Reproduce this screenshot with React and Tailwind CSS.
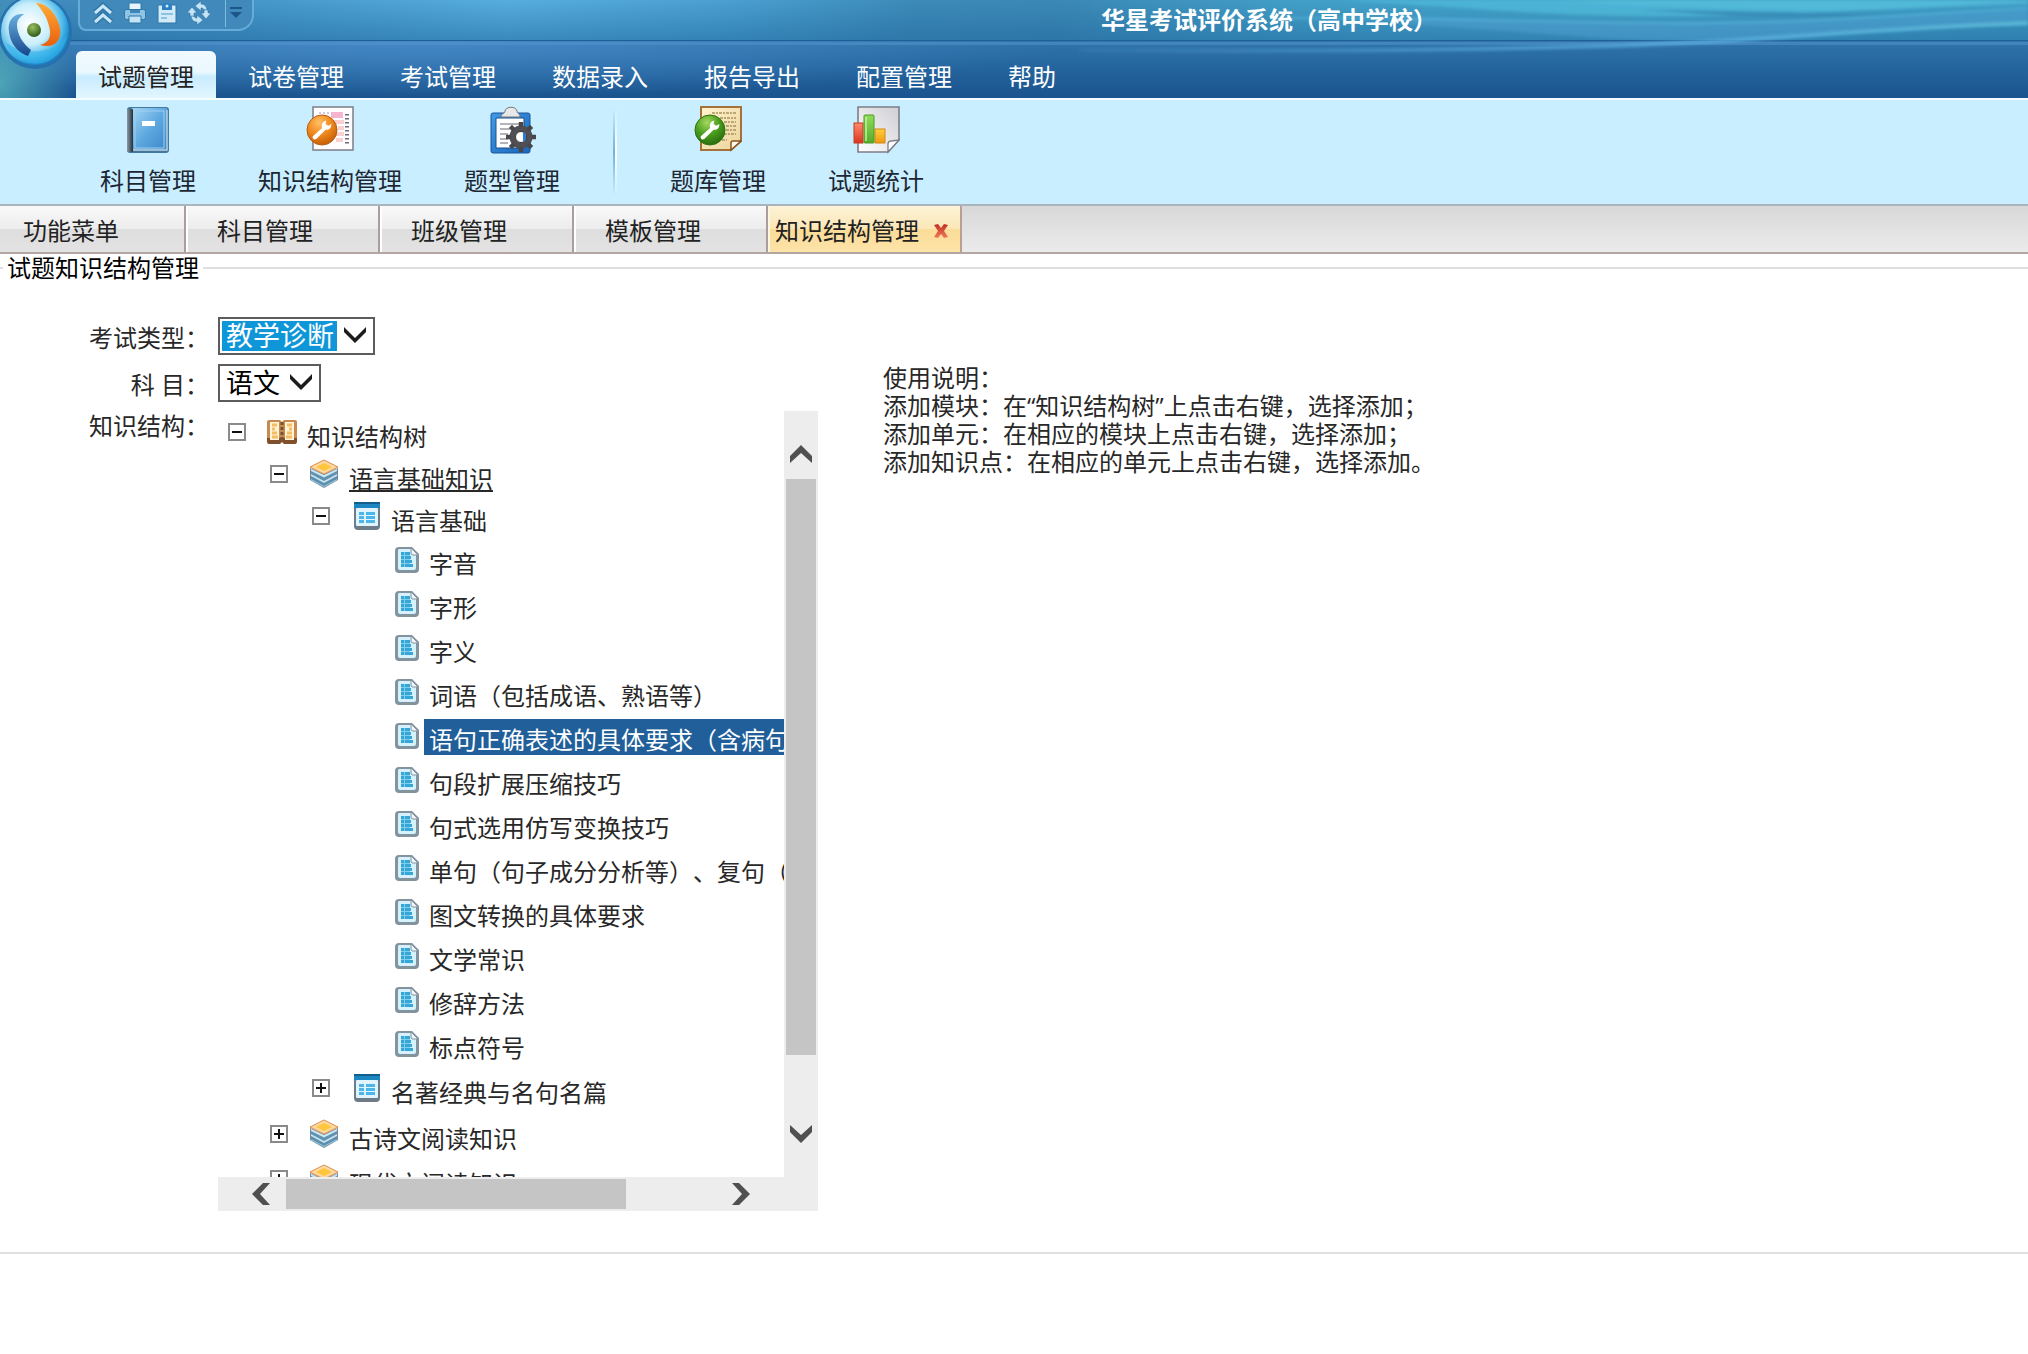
import React from "react";

const WRENCH =
  "M3 17 L11.5 9.5 C10.5 6.5 12 3.5 15.2 2.8 L14.6 6 L17 7.6 L19.8 5.8 C20.3 9 17.8 11.6 14.6 11.2 L6.2 19.6 C4 20.6 2.2 18.8 3 17 Z";

function HeaderBackdrop() {
  return (
    <svg className="absolute inset-0 h-full w-full" viewBox="0 0 2028 98" preserveAspectRatio="none" aria-hidden="true">
      <defs>
        <linearGradient id="hTop" x1="0" x2="1" y1="0" y2="0">
          <stop offset="0" stopColor="#3f88ba" />
          <stop offset="0.12" stopColor="#4597ca" />
          <stop offset="0.25" stopColor="#56aede" />
          <stop offset="0.36" stopColor="#4aa0d0" />
          <stop offset="0.45" stopColor="#3d8bb8" />
          <stop offset="0.52" stopColor="#3b88b5" />
          <stop offset="0.64" stopColor="#42a0c8" />
          <stop offset="0.8" stopColor="#45a5c9" />
          <stop offset="1" stopColor="#3d9cc4" />
        </linearGradient>
        <linearGradient id="hShade" x1="0" x2="0" y1="0" y2="1">
          <stop offset="0" stopColor="#1d6299" stopOpacity="0" />
          <stop offset="1" stopColor="#1d6299" stopOpacity="0.5" />
        </linearGradient>
        <linearGradient id="hNav" x1="0" x2="0" y1="0" y2="1">
          <stop offset="0" stopColor="#2f74ab" />
          <stop offset="1" stopColor="#1a538f" />
        </linearGradient>
        <radialGradient id="hGlow">
          <stop offset="0" stopColor="#4b90d0" stopOpacity="0.75" />
          <stop offset="1" stopColor="#4b90d0" stopOpacity="0" />
        </radialGradient>
        <radialGradient id="hTeal" cx="0" cy="0.85" r="1">
          <stop offset="0" stopColor="#58b6bf" stopOpacity="0.8" />
          <stop offset="1" stopColor="#58b6bf" stopOpacity="0" />
        </radialGradient>
        <linearGradient id="hFade" x1="0" x2="1" y1="0" y2="0">
          <stop offset="0" stopColor="#5aaee0" stopOpacity="0.1" />
          <stop offset="0.6" stopColor="#5aaee0" stopOpacity="0.8" />
          <stop offset="1" stopColor="#5ab8d6" stopOpacity="1" />
        </linearGradient>
        <filter id="hSoft" x="-5%" y="-50%" width="110%" height="200%">
          <feGaussianBlur stdDeviation="1.6" />
        </filter>
        <clipPath id="hNavClip">
          <rect y="41" width="2028" height="57" />
        </clipPath>
      </defs>
      <rect width="2028" height="41" fill="url(#hTop)" />
      <rect width="2028" height="41" fill="url(#hShade)" />
      <rect y="41" width="2028" height="57" fill="url(#hNav)" />
      <g clipPath="url(#hNavClip)">
        <ellipse cx="420" cy="41" rx="640" ry="56" fill="url(#hGlow)" />
      </g>
      <rect width="76" height="98" fill="url(#hTeal)" />
      <g filter="url(#hSoft)">
        <path d="M1400 16 C1560 22 1700 26 1900 15 L2028 8 V24 C1950 26 1870 31 1740 40 H1640 C1560 36 1480 28 1400 24 Z" fill="#4f9fd2" opacity="0.5" />
        <path d="M1340 0 C1480 8 1560 18 1700 16 C1820 14 1900 8 2028 0 Z" fill="#50bbdb" opacity="0.7" />
        <path d="M1560 0 C1660 8 1780 10 1880 10 L2028 4 V0 Z" fill="#58c0de" opacity="0.6" />
        <path d="M1640 10 C1740 17 1820 19 1880 15 C1820 13 1740 11 1640 10 Z" fill="#3689b5" opacity="0.9" />
        <path d="M1290 18 C1480 18 1560 23 1700 23 C1800 23 1880 16 2028 8" stroke="#5bbde0" strokeWidth="2" fill="none" opacity="0.6" />
      </g>
      <rect y="40" width="2028" height="1" fill="#1f5f97" />
      <rect y="42" width="2028" height="3" fill="#5596cd" opacity="0.5" />
      <g filter="url(#hSoft)" fill="none">
        <path d="M1080 50 C1400 53 1620 47 1740 40 C1850 32 1940 26 2028 23" stroke="url(#hFade)" strokeWidth="4" />
      </g>
    </svg>
  );
}

function Logo() {
  return (
    <svg className="h-full w-full" viewBox="0 0 76 76" aria-hidden="true">
      <defs>
        <radialGradient id="lgBall" cx="0.42" cy="0.4" r="0.6">
          <stop offset="0" stopColor="#ffffff" />
          <stop offset="0.5" stopColor="#c9eefb" />
          <stop offset="0.85" stopColor="#3fb2e6" />
          <stop offset="1" stopColor="#1b86c8" />
        </radialGradient>
        <linearGradient id="lgBlue" x1="0" x2="0" y1="0" y2="1">
          <stop offset="0" stopColor="#6ab0e0" />
          <stop offset="1" stopColor="#16468c" />
        </linearGradient>
        <linearGradient id="lgOrange" x1="0" x2="0" y1="0" y2="1">
          <stop offset="0" stopColor="#ffac38" />
          <stop offset="1" stopColor="#ea5f0c" />
        </linearGradient>
        <radialGradient id="lgGreen" cx="0.4" cy="0.3" r="0.7">
          <stop offset="0" stopColor="#9cc060" />
          <stop offset="1" stopColor="#2f5c1a" />
        </radialGradient>
      </defs>
      <circle cx="35" cy="37" r="37" fill="#2672ae" />
      <circle cx="35" cy="36" r="34" fill="url(#lgBall)" />
      <path d="M6 48 C14 66 32 72 46 67 C58 62 66 52 67 40 C56 58 28 62 6 48 Z" fill="#34b4ec" opacity="0.6" />
      <path d="M24 19 C13 18 7 26 9 37 C10 48 18 58 28 61 L31 55 C23 49 17 39 17 30 C17 25 20 22 24 19 Z" fill="url(#lgBlue)" />
      <path d="M36 8 C47 8 57 19 60 33 C62 46 54 54 40 50 C49 48 52 41 49 31 C47 22 42 15 36 8 Z" fill="url(#lgOrange)" />
      <circle cx="34" cy="35" r="7" fill="url(#lgGreen)" />
    </svg>
  );
}

function UpIcon() {
  return (
    <svg className="h-6 w-6" viewBox="0 0 24 24" fill="none" aria-hidden="true">
      <g stroke="#2d76a8" strokeWidth="6"><path d="M4 12 L12 5 L20 12" /><path d="M4 21 L12 14 L20 21" /></g>
      <g stroke="#c9e6f6" strokeWidth="3"><path d="M4 12 L12 5 L20 12" /><path d="M4 21 L12 14 L20 21" /></g>
    </svg>
  );
}
function PrintIcon() {
  return (
    <svg className="h-6 w-6" viewBox="0 0 24 24" aria-hidden="true">
      <path d="M6 2 h12 v7 h-12 Z" fill="#e6f5fd" stroke="#2d76a8" />
      <rect x="1.500" y="8.500" width="21" height="10" rx="2" fill="#8fc4e4" stroke="#2d76a8" />
      <rect x="7" y="9" width="10" height="3" fill="#3f86b8" />
      <path d="M6 15 h12 v7 h-12 Z" fill="#c4e3f4" stroke="#2d76a8" />
    </svg>
  );
}
function ClipIcon() {
  return (
    <svg className="h-6 w-6" viewBox="0 0 24 24" aria-hidden="true">
      <path d="M3 4 h18 v18 h-18 Z" fill="#d3ebf8" stroke="#2d76a8" />
      <path d="M7 9 V5 C8 1 16 1 17 5 V9 Z" fill="#2c7fc4" />
      <circle cx="12" cy="5" r="1.500" fill="#d6eefb" />
      <path d="M6 13 h12 M6 17 h6" stroke="#8cc2e2" strokeWidth="2" />
    </svg>
  );
}
function RefreshIcon() {
  return (
    <svg className="h-6 w-6" viewBox="0 0 24 24" aria-hidden="true">
      <g fill="#c4e3f5" stroke="#2d76a8" strokeWidth="0.6">
        <path d="M8 5 L14 0 V3 C18 3 20 6 20 10 L16 8 C16 7 15 7 14 7 V10 Z" />
        <path d="M16 19 L10 24 V21 C6 21 4 18 4 14 L8 16 C8 17 9 17 10 17 V14 Z" />
        <path d="M0 12 L5 6 L10 12 H7 V15 H3 V12 Z" />
        <path d="M24 12 L19 18 L14 12 H17 V9 H21 V12 Z" />
      </g>
    </svg>
  );
}

const QUICK = [
  { label: "收起", Icon: UpIcon },
  { label: "打印", Icon: PrintIcon },
  { label: "粘贴", Icon: ClipIcon },
  { label: "刷新", Icon: RefreshIcon },
];

const NAV = ["试卷管理", "考试管理", "数据录入", "报告导出", "配置管理", "帮助"];

function BookIcon() {
  return (
    <svg className="h-12 w-12" viewBox="0 0 48 48" aria-hidden="true">
      <defs>
        <linearGradient id="bkG" x1="0" x2="1" y1="0" y2="1">
          <stop offset="0" stopColor="#a5d6f5" />
          <stop offset="0.5" stopColor="#5fa9e0" />
          <stop offset="1" stopColor="#3b86cb" />
        </linearGradient>
        <linearGradient id="bkS" x1="0" x2="1" y1="0" y2="0">
          <stop offset="0" stopColor="#8b9aa4" />
          <stop offset="1" stopColor="#22303a" />
        </linearGradient>
      </defs>
      <rect x="3" y="1" width="42" height="46" rx="3" fill="#44789f" />
      <rect x="8" y="2" width="35" height="42" rx="1" fill="url(#bkG)" />
      <rect x="11" y="5" width="29" height="37" fill="none" stroke="#9bd0f2" />
      <path d="M43 4 V44 H9" stroke="#b9cfdd" strokeWidth="1.500" fill="none" />
      <rect x="3" y="3" width="6" height="43" rx="1" fill="url(#bkS)" />
      <rect x="18" y="15" width="13" height="5" fill="#fff" />
    </svg>
  );
}
function WrenchPageIcon({ green }) {
  return (
    <svg className="h-12 w-12" viewBox="0 0 48 48" aria-hidden="true">
      <defs>
        <radialGradient id="wpO" cx="0.4" cy="0.25" r="0.8">
          <stop offset="0" stopColor="#ffc066" />
          <stop offset="0.5" stopColor="#f08a1d" />
          <stop offset="1" stopColor="#c25a06" />
        </radialGradient>
        <radialGradient id="wpG" cx="0.4" cy="0.25" r="0.8">
          <stop offset="0" stopColor="#a4d95e" />
          <stop offset="0.5" stopColor="#4c9f1e" />
          <stop offset="1" stopColor="#26680c" />
        </radialGradient>
        <linearGradient id="wpP" x1="0" x2="1" y1="0" y2="1">
          <stop offset="0" stopColor="#fff3cf" />
          <stop offset="1" stopColor="#ecd49b" />
        </linearGradient>
      </defs>
      {green ? (
        <g>
          <path d="M7 1 H47 V35 L37 44 H7 Z" fill="url(#wpP)" stroke="#a5713a" strokeWidth="2" />
          <path d="M47 35 L37 44 V37 Q37 35 39 35 Z" fill="#fffaf0" stroke="#8a531c" strokeWidth="1.500" />
          <g stroke="#a8935f" strokeWidth="1.500" strokeDasharray="3 1 2 1">
            <path d="M18 7 H42 M26 12 H42 M30 16 H42 M32 20 H42 M32 24 H42 M30 28 H42 M28 34 H33" />
          </g>
        </g>
      ) : (
        <g>
          <rect x="7" y="1" width="40" height="43" fill="#fffdfd" stroke="#84848f" strokeWidth="1.600" />
          <rect x="25" y="6" width="12" height="6" fill="#f6b5cf" />
          <path d="M13 7 H23" stroke="#c4b4d0" strokeWidth="1.500" strokeDasharray="2 2" />
          <g fill="#fbd0d0">
            <rect x="28" y="14" width="10" height="4" /><rect x="32" y="20" width="6" height="4" />
            <rect x="30" y="26" width="8" height="4" /><rect x="30" y="32" width="7" height="4" />
          </g>
          <path d="M41 8 V39" stroke="#6f6a80" strokeWidth="4" strokeDasharray="1.500 2.500" />
        </g>
      )}
      <circle cx="16" cy="24" r="15" fill={green ? "url(#wpG)" : "url(#wpO)"} stroke={green ? "#2c7010" : "#b75c0e"} />
      <g transform="translate(3.5,11.5) scale(1.1)">
        <path d={WRENCH} fill="#fff" />
      </g>
    </svg>
  );
}
function GearClipIcon() {
  return (
    <svg className="h-12 w-12" viewBox="0 0 48 48" aria-hidden="true">
      <defs>
        <linearGradient id="gcB" x1="0" x2="1" y1="0" y2="1">
          <stop offset="0" stopColor="#3f9bea" />
          <stop offset="1" stopColor="#1a66b8" />
        </linearGradient>
      </defs>
      <rect x="3" y="7" width="39" height="40" rx="2" fill="url(#gcB)" stroke="#1c5596" />
      <path d="M8 12 H36 V42 H8 Z" fill="#fff" stroke="#1b4f8c" />
      <g stroke="#9a9aa2" strokeWidth="1.500"><path d="M12 18 H32 M12 23 H22 M12 28 H20 M12 33 H20 M12 37 H20" /></g>
      <path d="M13 11 C13 7 17 8 17 5 C18 0 28 0 29 5 C29 8 32 7 32 11 Z" fill="#e8e8e8" stroke="#777" />
      <g transform="translate(33,31)">
        <circle r="8.500" fill="none" stroke="#505054" strokeWidth="6" />
        <g stroke="#48484c" strokeWidth="4.500">
          <path d="M0 -15 V-10 M0 15 V10 M-15 0 H-10 M15 0 H10 M-10.600 -10.600 L-7 -7 M10.600 10.600 L7 7 M-10.600 10.600 L-7 7 M10.600 -10.600 L7 -7" />
        </g>
        <circle r="5.500" fill="#fff" stroke="#333" />
        <path d="M2 -5 A5.500 5.500 0 0 1 2 5 Z" fill="#2c7bd0" />
      </g>
    </svg>
  );
}
function ChartPageIcon() {
  return (
    <svg className="h-12 w-12" viewBox="0 0 48 48" aria-hidden="true">
      <defs>
        <linearGradient id="cpP" x1="0" x2="1" y1="1" y2="0">
          <stop offset="0" stopColor="#ffffff" />
          <stop offset="1" stopColor="#cfcfd4" />
        </linearGradient>
        <linearGradient id="cpR" x1="0" x2="0" y1="0" y2="1"><stop offset="0" stopColor="#ff8a70" /><stop offset="1" stopColor="#d8371f" /></linearGradient>
        <linearGradient id="cpG" x1="0" x2="0" y1="0" y2="1"><stop offset="0" stopColor="#8fdd5a" /><stop offset="1" stopColor="#57ab2b" /></linearGradient>
        <linearGradient id="cpY" x1="0" x2="0" y1="0" y2="1"><stop offset="0" stopColor="#ffcf3f" /><stop offset="1" stopColor="#ee9a10" /></linearGradient>
      </defs>
      <path d="M6 1 H47 V34 L36 46 H6 Z" fill="url(#cpP)" stroke="#7d7d88" strokeWidth="1.600" />
      <path d="M47 34 L36 46 V38 Q36 35 39 35 Z" fill="#fff" stroke="#7d7d88" strokeWidth="1.300" />
      <rect x="2" y="17" width="9" height="20" fill="url(#cpR)" stroke="#c43a22" />
      <rect x="23" y="23" width="10" height="14" fill="url(#cpY)" stroke="#d48a10" />
      <rect x="12" y="9" width="10" height="28" rx="1" fill="url(#cpG)" stroke="#4a9a22" />
      <path d="M14 11 V35" stroke="#c4f0a0" strokeWidth="1.500" />
    </svg>
  );
}

function RibbonButton({ label, children }) {
  return (
    <button type="button" className="flex h-full flex-col items-center px-[31px] pt-1.5">
      {children}
      <span className="mt-[11px] leading-8">{label}</span>
    </button>
  );
}

function Ribbon() {
  return (
    <div className="flex h-[106px] items-stretch border-t-2 border-[#f4fcff] bg-[#c9eeff] pl-[69px] text-[#1d2733]">
      <RibbonButton label="科目管理"><BookIcon /></RibbonButton>
      <RibbonButton label="知识结构管理"><WrenchPageIcon /></RibbonButton>
      <RibbonButton label="题型管理"><GearClipIcon /></RibbonButton>
      <div className="flex w-12 justify-center py-2">
        <div className="w-[2px] bg-linear-to-b from-[#c9eeff] via-[#6fb3d6] to-[#c9eeff]" />
        <div className="w-[2px] bg-linear-to-b from-[#c9eeff] via-white to-[#c9eeff]" />
      </div>
      <RibbonButton label="题库管理"><WrenchPageIcon green /></RibbonButton>
      <RibbonButton label="试题统计"><ChartPageIcon /></RibbonButton>
    </div>
  );
}

function PageTabs() {
  return (
    <div className="flex h-[50px] border-t-2 border-b-2 border-t-[#a9b5bd] border-b-[#b3a5a1] bg-linear-to-b from-[#d8d8d8] to-[#ebebeb] text-[#222]">
      {["功能菜单", "科目管理", "班级管理", "模板管理"].map((t, i) => (
        <button
          key={t}
          type="button"
          className={
            (i === 0 ? "w-[186px] pl-[23px]" : "w-[194px] border-l-2 border-l-white pl-[29px]") +
            " border-r-2 border-r-[#a99e9b] bg-[linear-gradient(#f9f9f9,#ececec_50%,#dedede_50%,#e4e2e2)] pt-1 text-left"
          }
        >
          {t}
        </button>
      ))}
      <div className="flex w-[194px] items-center justify-between border-2 border-y-0 border-l-[#fff6df] border-r-[#b9a094] bg-[linear-gradient(#fdf3d7,#fbe6b6_50%,#fbdc98_50%,#fde3a8)] pt-1 pr-2.5 pl-[5px]">
        <button type="button">知识结构管理</button>
        <button type="button" aria-label="关闭">
          <svg className="h-[18px] w-[18px]" viewBox="0 0 18 18" aria-hidden="true">
            <defs>
              <linearGradient id="clX" x1="0" x2="0" y1="0" y2="1"><stop offset="0" stopColor="#c22f24" /><stop offset="1" stopColor="#ef7a5c" /></linearGradient>
            </defs>
            <path d="M2 3 L6 2 L9 6 L12 2 L16 3 L12 9 L16 15 L12 16 L9 12 L6 16 L2 15 L6 9 Z" fill="url(#clX)" />
          </svg>
        </button>
      </div>
    </div>
  );
}

function SelectChevron() {
  return (
    <svg className="pointer-events-none absolute top-2 right-2 h-5 w-6" viewBox="0 0 24 20" aria-hidden="true">
      <path d="M1 2 L12 13 L23 2 V7 L12 18 L1 7 Z" fill="#1c1c1c" />
    </svg>
  );
}

function BookTreeIcon() {
  return (
    <svg className="h-7 w-8" viewBox="0 0 32 28" aria-hidden="true">
      <path d="M1 4 Q1 2 3 2 H14 L16 4 L18 2 H29 Q31 2 31 4 V23 Q31 25 29 25 H18 L16 23 L14 25 H3 Q1 25 1 23 Z" fill="#c98a52" />
      <path d="M1 20 V23 Q1 26 3 26 H14 L16 24 L18 26 H29 Q31 26 31 23 V20 Z" fill="#80502c" />
      <path d="M4 4 H13 V22 H4 Z M19 4 H28 V22 H19 Z" fill="#fff3d8" />
      <path d="M6 7 H11 M6 11 H9 M6 15 H11 M6 19 H12 M21 7 H26 M23 11 H26 M21 15 H26 M20 19 H26" stroke="#f5bd62" strokeWidth="3" />
      <path d="M16 4 V24" stroke="#7a5233" strokeWidth="3" strokeDasharray="3 2" />
    </svg>
  );
}
function StackIcon() {
  return (
    <svg className="h-[30px] w-8" viewBox="0 0 32 30" aria-hidden="true">
      <path d="M2 9 L16 15 L30 9 V21 L16 29 L2 21 Z" fill="#71899b" />
      <path d="M3 10 L16 16 L29 10 V12 L16 18.500 L3 12 Z" fill="#c9e8f6" />
      <path d="M3 13 L16 19.500 L29 13 V14 L16 21 L3 14 Z" fill="#4d9cc6" />
      <path d="M3 15 L16 22 L29 15 V17 L16 24 L3 17 Z" fill="#bfe5f6" />
      <path d="M3 18 L16 25 L29 18 V19 L16 26 L3 19 Z" fill="#4797c4" />
      <path d="M3 20 L16 27 L29 20 V21 L16 28 L3 21 Z" fill="#8fd0ee" />
      <path d="M16 1 L30 8 L16 15 L2 8 Z" fill="#fbd9a0" stroke="#dd8c4c" />
      <path d="M16 4 L24 8 L16 12 L8 8 Z" fill="#ffc53d" />
    </svg>
  );
}
function ListIcon() {
  return (
    <svg className="h-[30px] w-8" viewBox="0 0 32 30" aria-hidden="true">
      <rect x="4" y="2" width="26" height="27" rx="4" fill="#6d7c88" />
      <rect x="6" y="7" width="22" height="18" rx="1" fill="#dff4fd" />
      <rect x="4" y="1" width="26" height="6" fill="#1b86bf" />
      <rect x="4" y="1" width="26" height="2" fill="#125f8e" />
      <g fill="#4ab6ea">
        <rect x="9" y="11" width="5" height="3" /><rect x="16" y="11" width="9" height="3" />
        <rect x="9" y="15" width="5" height="3" /><rect x="16" y="15" width="9" height="3" />
        <rect x="9" y="19" width="5" height="3" /><rect x="16" y="19" width="9" height="3" />
      </g>
    </svg>
  );
}
function LeafIcon() {
  return (
    <svg className="h-[26px] w-6 shrink-0" viewBox="0 0 24 26" aria-hidden="true">
      <path d="M4 0 H17 L24 7 V22 Q24 26 20 26 H4 Q0 26 0 22 V4 Q0 0 4 0 Z" fill="#84949e" />
      <path d="M4 2 H16 L21 8 V21 Q21 23 19 23 H5 Q3 23 3 21 V4 Q3 2 4 2 Z" fill="#d5f1fb" />
      <path d="M16 1 V6 Q16 8 18 8 H23 Z" fill="#eef5f8" stroke="#84949e" />
      <rect x="6" y="5" width="9" height="15" fill="#7fcdec" />
      <g fill="#35a6d6">
        <rect x="6" y="5" width="3" height="3" /><rect x="10" y="5" width="5" height="3" />
        <rect x="6" y="9" width="3" height="3" /><rect x="10" y="9" width="6" height="3" />
        <rect x="6" y="13" width="3" height="3" /><rect x="10" y="13" width="7" height="3" />
        <rect x="6" y="17" width="3" height="3" /><rect x="10" y="17" width="8" height="3" />
      </g>
    </svg>
  );
}

const INDENT = ["pl-[10px]", "pl-[52px]", "pl-[94px]"];
const NODE_ICONS = [BookTreeIcon, StackIcon, ListIcon];

function TreeNode({ level, open, label, height, underline }) {
  const Icon = NODE_ICONS[level];
  return (
    <li className={"flex items-center whitespace-nowrap " + height + " " + INDENT[level]}>
      <span className="flex items-center gap-5 pb-2.5">
        <button
          type="button"
          aria-label={(open ? "折叠" : "展开") + label}
          className="flex h-[18px] w-[18px] items-center justify-center border-2 border-[#8a8a8a] bg-white"
        >
          <svg className="h-2.5 w-2.5" viewBox="0 0 10 10" aria-hidden="true">
            <path d={open ? "M0 5 H10" : "M0 5 H10 M5 0 V10"} stroke="#111" strokeWidth="2" />
          </svg>
        </button>
        <Icon />
      </span>
      <a href="#node" className={"ml-[9px] " + (underline ? "underline underline-offset-2" : "")}>{label}</a>
    </li>
  );
}

const LEAVES = [
  "字音",
  "字形",
  "字义",
  "词语（包括成语、熟语等）",
  "语句正确表述的具体要求（含病句",
  "句段扩展压缩技巧",
  "句式选用仿写变换技巧",
  "单句（句子成分分析等）、复句（",
  "图文转换的具体要求",
  "文学常识",
  "修辞方法",
  "标点符号",
];

function Leaf({ label, selected }) {
  return (
    <li className="flex h-11 items-center pl-[177px] whitespace-nowrap">
      <span className="pb-2"><LeafIcon /></span>
      <a href="#leaf" className={"-mt-1.5 ml-[5px] px-[5px] pt-1.5 " + (selected ? "bg-[#215f9a] text-white" : "")}>{label}</a>
    </li>
  );
}

function Arrow({ d, box, className }) {
  return (
    <svg className={className} viewBox={box} aria-hidden="true">
      <path d={d} fill="#505050" />
    </svg>
  );
}

function TreePanel() {
  return (
    <div className="grid h-[800px] w-[600px] grid-cols-[1fr_34px] grid-rows-[1fr_34px] bg-[#ededed]">
      <ul className="h-[766px] overflow-hidden bg-white pt-[5px]">
        <TreeNode level={0} open label="知识结构树" height="h-[42px]" />
        <TreeNode level={1} open label="语言基础知识" height="h-[42px]" underline />
        <TreeNode level={2} open label="语言基础" height="h-[42px]" />
        {LEAVES.map((l, i) => <Leaf key={l} label={l} selected={i === 4} />)}
        <TreeNode level={2} label="名著经典与名句名篇" height="h-[46px]" />
        <TreeNode level={1} label="古诗文阅读知识" height="h-[46px]" />
        <TreeNode level={1} label="现代文阅读知识" height="h-[44px]" />
      </ul>
      <div className="flex flex-col items-center">
        <div className="flex h-[68px] items-end pb-4"><Arrow className="h-[18px] w-[22px]" box="0 0 22 18" d="M0 18 V11 L11 0 L22 11 V18 L11 8 Z" /></div>
        <div className="h-[576px] w-[30px] bg-[#c5c5c5]" />
        <div className="flex flex-1 items-end pb-[34px]"><Arrow className="h-[18px] w-[22px]" box="0 0 22 18" d="M0 0 V7 L11 18 L22 7 V0 L11 10 Z" /></div>
      </div>
      <div className="flex items-center">
        <div className="flex w-[68px] justify-end pr-4"><Arrow className="h-[22px] w-[18px]" box="0 0 18 22" d="M18 0 H11 L0 11 L11 22 H18 L8 11 Z" /></div>
        <div className="h-[30px] w-[340px] bg-[#c5c5c5]" />
        <div className="flex flex-1 justify-end pr-[34px]"><Arrow className="h-[22px] w-[18px]" box="0 0 18 22" d="M0 0 H7 L18 11 L7 22 H0 L10 11 Z" /></div>
      </div>
    </div>
  );
}

export default function App() {
  return (
    <div className="min-h-screen bg-white font-['Open_Sans','Noto_Sans_CJK_SC',sans-serif] text-[24px] leading-[30px] text-[#282828] [text-spacing-trim:space-all]">
      <header className="relative flex h-[98px] flex-col justify-between overflow-hidden">
        <HeaderBackdrop />
        <div className="relative flex h-10">
          <div className="ml-[78px] flex h-[31px] w-[176px] items-center gap-[8px] rounded-br-[16px] rounded-bl-[8px] border-2 border-t-0 border-[#66acd9] bg-[#4289bb] pb-1 pl-[11px]">
            {QUICK.map(({ label, Icon }) => (
              <button key={label} type="button" aria-label={label}><Icon /></button>
            ))}
            <button type="button" aria-label="更多" className="ml-1.5 flex h-7 w-5 items-center justify-center border-l border-[#7fbce0]">
              <svg className="h-3 w-3" viewBox="0 0 12 12" aria-hidden="true">
                <path d="M0 1 H12" stroke="#1c5588" strokeWidth="2" />
                <path d="M0 5 H12 L6 11 Z" fill="#1c5588" />
              </svg>
            </button>
          </div>
          <h1 className="ml-[847px] leading-10 font-bold text-white">华星考试评价系统（高中学校）</h1>
        </div>
        <div className="absolute -top-[5px] left-0 h-[76px] w-[76px]"><Logo /></div>
        <nav className="relative flex h-[47px] pl-[76px] text-white">
          <a href="#questions" className="mr-1 rounded-t-[6px] bg-[linear-gradient(#f0faff,#eaf8ff_45%,#c9ecff_55%,#e2f6ff)] px-[22px] leading-[52px] text-[#222]">试题管理</a>
          {NAV.map((n) => (
            <a key={n} href="#section" className="px-7 leading-[52px]">{n}</a>
          ))}
        </nav>
      </header>
      <Ribbon />
      <PageTabs />
      <main>
        <fieldset className="border-t-2 border-b-2 border-[#e0e0e0] pb-[41px]">
          <legend className="ml-[3px] px-1 leading-[28px] text-black">试题知识结构管理</legend>
          <div className="flex items-start pt-[35px]">
            <div className="grid grid-cols-[209px_600px] gap-x-[9px] gap-y-[9px]">
              <label htmlFor="exam" className="self-center pt-1 text-right">考试类型：</label>
              <div className="relative w-[157px]">
                <select id="exam" className="h-[38px] w-full appearance-none border-2 border-[#5c5c5c] bg-[linear-gradient(#0f96d8,#0f96d8)] bg-[length:115px_30px] bg-[position:2px_2px] bg-no-repeat pl-1.5 text-[27px] leading-[30px] text-white">
                  <option>教学诊断</option>
                </select>
                <SelectChevron />
              </div>
              <label htmlFor="subject" className="self-center pt-1 text-right">科 目：</label>
              <div className="relative w-[103px]">
                <select id="subject" className="h-[38px] w-full appearance-none border-2 border-[#5c5c5c] bg-white pl-1.5 text-[27px] leading-[30px] text-black">
                  <option>语文</option>
                </select>
                <SelectChevron />
              </div>
              <span className="text-right">知识结构：</span>
              <TreePanel />
            </div>
            <div className="ml-[65px] pt-[47px] leading-7">
              <p>使用说明：</p>
              <p>添加模块：在“知识结构树”上点击右键，选择添加；</p>
              <p>添加单元：在相应的模块上点击右键，选择添加；</p>
              <p>添加知识点：在相应的单元上点击右键，选择添加。</p>
            </div>
          </div>
        </fieldset>
      </main>
    </div>
  );
}
